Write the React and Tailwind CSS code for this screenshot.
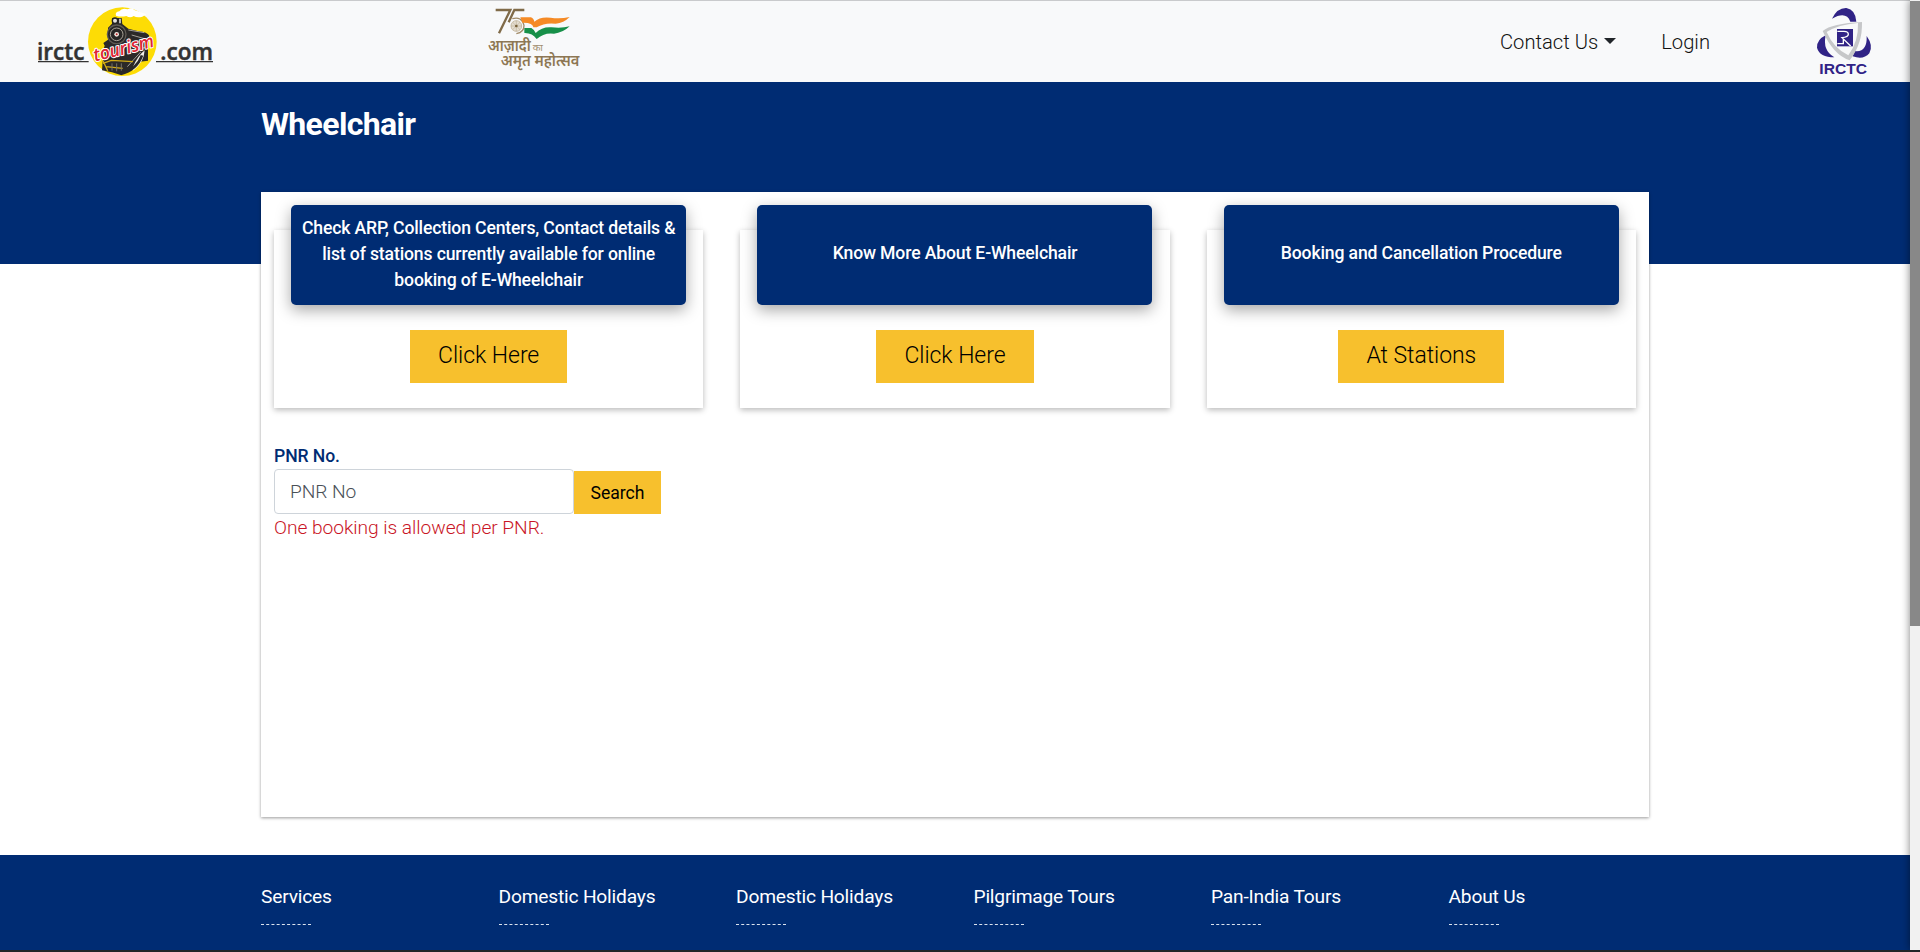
const cards = [
  {
    title: 'Check ARP, Collection Centers, Contact details & list of stations currently available for online booking of E-Wheelchair',
    action: 'Click Here',
    spacing: 'pb-[3px]',
  },
  { title: 'Know More About E-Wheelchair', action: 'Click Here', spacing: 'pb-[5px]' },
  { title: 'Booking and Cancellation Procedure', action: 'At Stations', spacing: 'pb-[5px]' },
];

const footerLinks = [
  'Services',
  'Domestic Holidays',
  'Domestic Holidays',
  'Pilgrimage Tours',
  'Pan-India Tours',
  'About Us',
];

function TourismLogo() {
  return (
    <svg viewBox="0 0 660 246" className="h-[82px] w-[220px] shrink-0">
      <text x="51" y="180" textLength="142" lengthAdjust="spacingAndGlyphs" fontSize="71" fontWeight="600" fontFamily="Open Sans, sans-serif" fill="#333" stroke="#333" strokeWidth="1.5">irctc</text>
      <text x="421" y="180" textLength="158" lengthAdjust="spacingAndGlyphs" fontSize="71" fontWeight="600" fontFamily="Open Sans, sans-serif" fill="#333" stroke="#333" strokeWidth="1.5">.com</text>
      <path d="M54 185H206M408 185H579" stroke="#333" strokeWidth="4" />
      <circle cx="307" cy="125" r="103" fill="#fddc05" />
      <path d="M288 47q-4-11 10-13q8-12 25-6q12-8 20 2q14 4 36 13l-12 7q-16 4-26-2q-10 8-22 0q-16 4-31-1z" fill="#fff" />
      <path d="M276 54h29l2 18l18 14l30 8q28 2 33 14l-4 10v64l-24 3l-28 24l-30 16l-26-8l-30-6l2-28l8-14l-6-20l4-12l-4-8l14-10l0-36l12-12z" fill="#2b2928" />
      <path d="M325 90l48 8M335 105l42 12M360 150l20-12M322 200l40-44" stroke="#a29e96" strokeWidth="3" fill="none" />
      <path d="M249 190l25-9l65 4M258 200l50 5M249 182l14 30" stroke="#d3ad16" strokeWidth="4" fill="none" />
      <path d="M276 190v22M290 190v24M304 190v22" stroke="#77736a" strokeWidth="3" />
      <circle cx="290" cy="103" r="28" fill="#272625" stroke="#5f5b55" strokeWidth="4" />
      <circle cx="290" cy="103" r="19" fill="none" stroke="#a9a398" strokeWidth="3" />
      <circle cx="290" cy="103" r="7" fill="#f4e9e2" />
      <circle cx="290" cy="103" r="3" fill="#b4292b" />
      <circle cx="285" cy="62" r="8" fill="#e5e4df" stroke="#222" strokeWidth="4" />
      <path d="M300 56v14" stroke="#fff" strokeWidth="4" />
      <path d="M340 212Q372 188 374 151Q352 168 338 203z" fill="#f1eee7" />
      <path d="M302 222Q350 210 366 166" stroke="#292929" strokeWidth="8" fill="none" />
      <g transform="rotate(-14 311 150)">
        <text x="219" y="163" textLength="186" lengthAdjust="spacingAndGlyphs" fontSize="54" fontWeight="600" fontStyle="italic" fontFamily="Open Sans, sans-serif" fill="#df2634" stroke="#fff" strokeWidth="6" strokeLinejoin="round" paintOrder="stroke">tourism</text>
      </g>
    </svg>
  );
}

function AzadiLogo() {
  return (
    <svg viewBox="0 0 390 246" className="h-[82px] w-[130px] shrink-0">
      <path d="M77 30H121L87 100M163 30H133L116 67" fill="none" stroke="#806b49" strokeWidth="7" />
      <path d="M127 56Q155 48 162 76Q163 97 139 101" fill="none" stroke="#a18b68" strokeWidth="4" />
      <circle cx="139" cy="78" r="16" fill="#e4ddd0" stroke="#c9bda6" strokeWidth="3" />
      <path d="M139 62v32M123 78h32M128 67l22 22M150 67l-22 22" stroke="#c0b298" strokeWidth="2" />
      <circle cx="139" cy="78" r="4" fill="#776039" />
      <path d="M151 52H182Q191 54 193 65Q210 49 242 53Q269 58 299 51Q281 69 257 71Q224 67 200 82L190 82Q189 67 157 68z" fill="#f58a25" />
      <path d="M163 84H184Q193 89 197 99Q216 80 244 82Q275 86 299 79Q278 99 252 101Q222 97 200 117Q187 98 163 99z" fill="#179049" />
      <text y="153" fontWeight="600" fontFamily="Noto Sans, Noto Sans Devanagari, sans-serif" fill="#8d7753">
        <tspan x="54" fontSize="46" textLength="128" lengthAdjust="spacingAndGlyphs">आज़ादी</tspan>
        <tspan x="188" fontSize="28" fontWeight="400" textLength="31" lengthAdjust="spacingAndGlyphs" fill="#a18e70">का</tspan>
        <tspan x="92" y="199" fontSize="46" textLength="236" lengthAdjust="spacingAndGlyphs">अमृत महोत्सव</tspan>
      </text>
    </svg>
  );
}

function IrctcLogo() {
  return (
    <svg viewBox="1002 0 180 246" className="h-[82px] w-[60px] shrink-0">
      <path d="M1056 56Q1072 23 1099 24Q1127 29 1129 65L1111 65Q1099 32 1056 56z" fill="#302386" />
      <path d="M1037 106Q1010 119 1011 143Q1019 172 1063 172Q1027 152 1037 106z" fill="#302386" />
      <path d="M1160 108Q1181 137 1168 160Q1150 181 1118 169L1124 153Q1162 158 1160 108z" fill="#302386" />
      <path d="M1028 93Q1055 70 1146 66Q1148 131 1109 181Q1060 165 1028 93zM1040 96Q1061 145 1105 166Q1136 125 1134 69Q1074 74 1040 96z" fill="#c6c7c9" fillRule="evenodd" />
      <path d="M1071 87H1119V139H1071z" fill="#302386" />
      <path d="M1072 94H1092Q1105 94 1105 103Q1105 112 1086 113L1112 138M1072 131H1090V118" fill="none" stroke="#fff" strokeWidth="4" />
      <text x="1018" y="221" textLength="143" lengthAdjust="spacingAndGlyphs" fontSize="45" fontWeight="700" fontFamily="Liberation Sans, sans-serif" fill="#302386">IRCTC</text>
    </svg>
  );
}

function Card({ title, action, spacing }) {
  return (
    <article className="flex h-[178px] flex-1 flex-col items-center bg-white shadow-[0_2px_6px_rgba(0,0,0,0.28)]">
      <h2 className={`-mt-[25px] flex h-[100px] w-[395px] shrink-0 items-center justify-center rounded-[5px] bg-[#002c73] px-2 text-center text-[17.6px] leading-[26px] font-medium tracking-[-0.14px] text-white shadow-[0_5px_15px_rgba(0,0,0,0.35)] ${spacing}`}>
        {title}
      </h2>
      <button className="mt-[25px] h-[53px] bg-[#f7c02d] px-7 text-[23px] font-light tracking-[-0.05px] text-black">{action}</button>
    </article>
  );
}

export default function App() {
  return (
    <div className="flex h-[952px] w-[1920px] flex-col overflow-hidden border-b-2 border-[#212529] bg-white font-[Roboto,sans-serif]">
      <div className="flex h-[950px]">
        <div className="flex w-[1910px] flex-col">
          <header className="flex h-[82px] shrink-0 items-center bg-[#f8f9fa] pl-5 shadow-[inset_0_1px_0_#c9cacc]">
            <TourismLogo />
            <div className="ml-[230px]"><AzadiLogo /></div>
            <nav className="ml-[900px] flex w-[314px] items-center pt-[2px] text-[20.2px] font-light text-[#111]">
              <a className="flex items-center gap-[6px]">
                Contact Us
                <span className="mb-[2px] border-x-[6px] border-t-[6px] border-x-transparent border-t-[#212529]" />
              </a>
              <a className="ml-[45px]">Login</a>
            </nav>
            <IrctcLogo />
          </header>
          <main className="flex h-[773px] shrink-0 flex-col bg-[linear-gradient(#002c73_182px,#fff_182px)] pl-[261px]">
            <h1 className="h-[110px] pt-[22px] text-[32px] leading-[40px] font-bold tracking-[-0.65px] text-white">Wheelchair</h1>
            <section className="h-[625px] w-[1388px] bg-white px-[13px] pt-[38px] shadow-[0_1px_3px_rgba(0,0,0,0.4)]">
              <div className="flex gap-[37px]">
                {cards.map((card, index) => <Card key={index} {...card} />)}
              </div>
              <form className="mt-[34px]">
                <label className="block h-[27px] text-[17.6px] leading-[28px] font-medium tracking-[-0.1px] text-[#002c73]">PNR No.</label>
                <div className="flex items-end">
                  <input placeholder="PNR No" className="h-[45px] w-[300px] rounded-[4px] border border-[#ced4da] px-[15px] text-[19.2px] font-light tracking-[-0.1px] placeholder:text-[#495057]" />
                  <button type="button" className="h-[43px] w-[87px] bg-[#f7c02d] pt-[1px] text-[17.6px] text-black">Search</button>
                </div>
                <p className="text-[19.2px] leading-[28px] font-light tracking-[-0.05px] text-[#c91526]">One booking is allowed per PNR.</p>
              </form>
            </section>
          </main>
          <footer className="grid h-[95px] shrink-0 grid-cols-[repeat(6,237.5px)] bg-[#002c73] pt-[28px] pl-[261px] text-white">
            {footerLinks.map((label, index) => (
              <div key={index}>
                <h3 className="h-[41px] text-[19.2px] leading-[27px] font-normal tracking-[-0.2px]">{label}</h3>
                <div className="w-[50px] border-t border-dashed border-[#dbe3ee]" />
              </div>
            ))}
          </footer>
        </div>
        <aside className="relative w-[10px] bg-[#f1f1f1] shadow-[0_0_8px_rgba(0,0,0,0.5)]">
          <div className="mt-px h-[625px] bg-[#888]" />
        </aside>
      </div>
    </div>
  );
}
